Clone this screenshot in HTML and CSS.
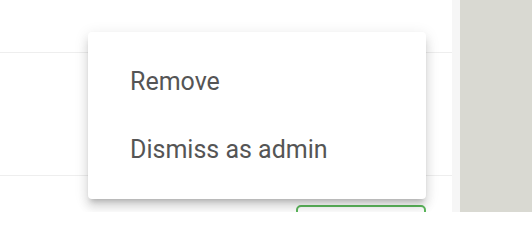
FILE: index.html
```html
<!DOCTYPE html>
<html>
<head>
<meta charset="utf-8">
<link rel="stylesheet" href="styles.css">
</head>
<body>
<div class="layout">
  <div class="main">
    <div class="row row-top"></div>
    <div class="row row-mid"></div>
    <div class="row row-bottom">
      <button class="btn-outline" type="button"></button>
    </div>
    <div class="menu">
      <div class="menu-item">Remove</div>
      <div class="menu-item">Dismiss as admin</div>
    </div>
  </div>
  <div class="strip"></div>
  <div class="sidebar"></div>
</div>
</body>
</html>
```
FILE: styles.css
```css
html, body {
  margin: 0;
  padding: 0;
  height: 212px;
  overflow: hidden;
  font-family: Roboto, "Noto Sans", sans-serif;
}
.layout {
  display: flex;
  height: 212px;
  overflow: hidden;
}
.main {
  position: relative;
  width: 452px;
  background: #fff;
  display: flex;
  flex-direction: column;
  overflow: hidden;
}
.row {
  flex-shrink: 0;
  border-bottom: 1px solid #eeeeee;
  box-sizing: border-box;
}
.row-top { height: 53px; }
.row-mid { height: 123px; }
.row-bottom {
  border-bottom: none;
  display: flex;
  justify-content: flex-end;
  padding-right: 26px;
  padding-top: 29px;
}
.btn-outline {
  flex-shrink: 0;
  width: 130px;
  height: 40px;
  border: 2px solid #5cb85c;
  border-radius: 5px;
  background: #fff;
  padding: 0;
}
.strip {
  width: 8px;
  background: #f6f6f6;
}
.sidebar {
  flex: 1;
  background: #d9d9d2;
}
.menu {
  position: absolute;
  left: 88px;
  top: 32px;
  width: 338px;
  padding: 16px 0 15px;
  background: #fff;
  border-radius: 4px;
  box-shadow: 0 5px 5px -3px rgba(0,0,0,.2), 0 8px 10px 1px rgba(0,0,0,.1), 0 3px 14px 2px rgba(0,0,0,.08);
}
.menu-item {
  height: 68px;
  line-height: 68px;
  padding-left: 42px;
  font-size: 25px;
  color: #555555;
  white-space: nowrap;
}
```
